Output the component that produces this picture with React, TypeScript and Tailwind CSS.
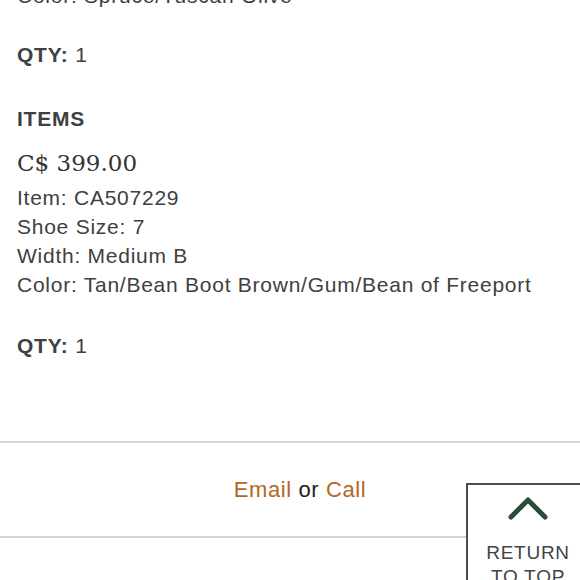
import React from 'react';

const detailLines = [
  'Item: CA507229',
  'Shoe Size: 7',
  'Width: Medium B',
  'Color: Tan/Bean Boot Brown/Gum/Bean of Freeport',
];

const Qty: React.FC<{ className?: string }> = ({ className = '' }) => (
  <p className={`text-[21px] leading-[29.3px] ${className}`}>
    <span className="font-bold">QTY:</span> 1
  </p>
);

const ReturnToTop: React.FC = () => (
  <button className="absolute left-[466px] top-[483px] flex h-[120px] w-[124px] flex-col items-center border-2 border-[#4d4d4d] bg-white">
    <svg
      width="40"
      height="24"
      viewBox="0 0 40 24"
      className="mt-[10.5px]"
      fill="none"
      stroke="#2e4a39"
      strokeWidth="5"
      strokeLinecap="round"
      strokeLinejoin="round"
    >
      <path d="M3 21 L20 4 L37 21" />
    </svg>
    <span className="mt-[21px] text-[19px] leading-[24px] text-[#444]">RETURN</span>
    <span className="text-[19px] leading-[24px] text-[#444]">TO TOP</span>
  </button>
);

export default function App() {
  return (
    <div className="relative h-[580px] w-[580px] overflow-hidden bg-white font-['Liberation_Sans',Arial,sans-serif] tracking-[0.75px] text-[#404040]">
      <div className="-mt-[19px] px-[17px]">
        <p className="text-[21px] leading-[29.3px]">Color: Spruce/Tuscan Olive</p>
        <Qty className="mt-[30px]" />
        <h3 className="mt-[34px] text-[21px] font-bold leading-[29.3px]">ITEMS</h3>
        <p className="mt-[13.4px] font-['DejaVu_Serif',serif] text-[23px] leading-[34px] tracking-normal text-[#333]">
          C$ 399.00
        </p>
        <div className="mt-[2.3px]">
          {detailLines.map((line) => (
            <p key={line} className="text-[21px] leading-[29.3px]">
              {line}
            </p>
          ))}
        </div>
        <Qty className="mt-[31px]" />
      </div>

      <div className="mt-[81px] border-t-2 border-[#d4d4d4]" />
      <div className="flex h-[93px] items-center justify-center whitespace-pre pl-5 text-[22px] tracking-[0.6px]">
        <a className="text-[#b4661f]">Email</a>
        <span className="text-[#222]"> or </span>
        <a className="text-[#b4661f]">Call</a>
      </div>
      <div className="border-t-2 border-[#d4d4d4]" />

      <ReturnToTop />
    </div>
  );
}
